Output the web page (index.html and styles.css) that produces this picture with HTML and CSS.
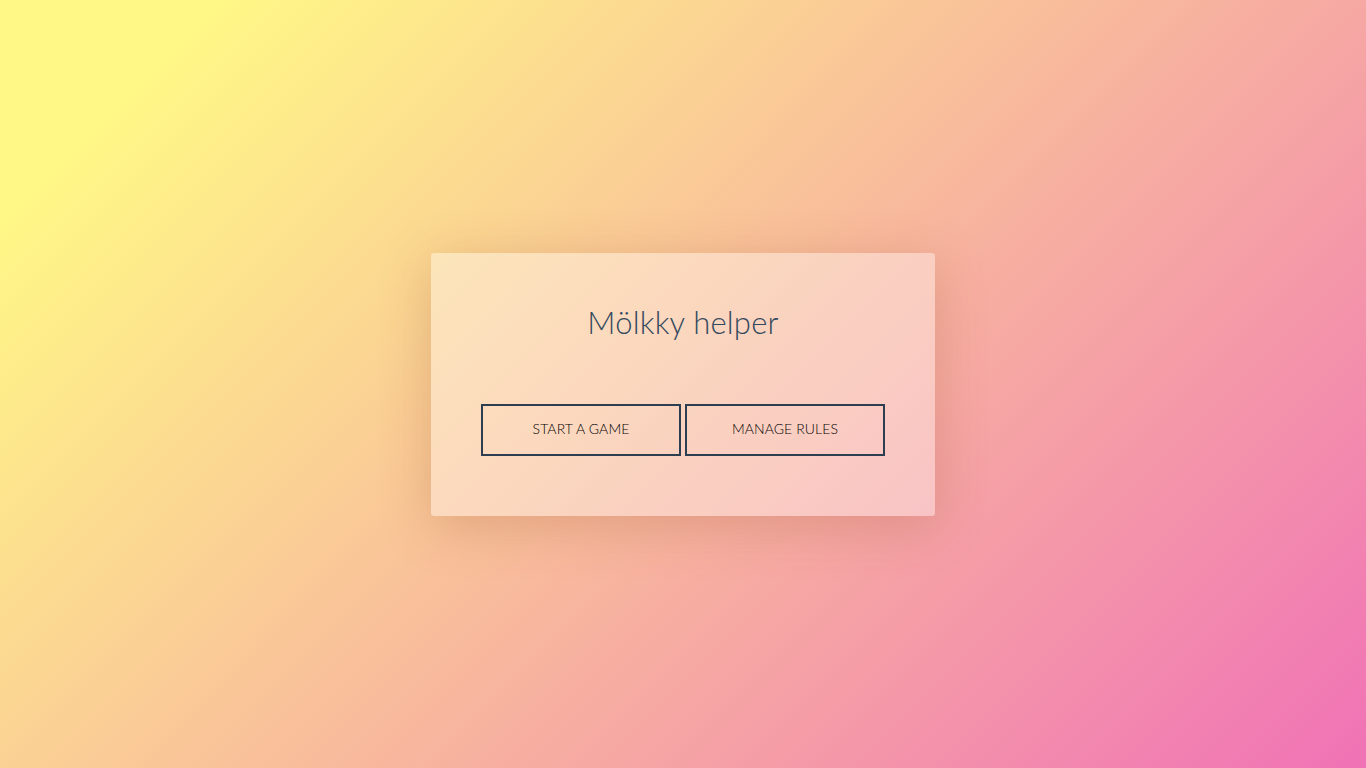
FILE: index.html
```html
<!DOCTYPE html>
<html lang="en">
<head>
<meta charset="utf-8">
<title>Mölkky helper</title>
<link rel="stylesheet" href="styles.css">
</head>
<body>
<main class="page">
  <section class="card">
    <h1 class="title">Mölkky helper</h1>
    <div class="actions">
      <button class="btn">START A GAME</button>
      <button class="btn">MANAGE RULES</button>
    </div>
  </section>
</main>
</body>
</html>
```
FILE: styles.css
```css
html, body {
  margin: 0;
  height: 100%;
}
body {
  background: linear-gradient(135deg, #fff886 10%, #f072b6 100%);
  font-family: Lato, "Open Sans", sans-serif;
}
.page {
  height: 100%;
  display: flex;
  align-items: center;
  justify-content: center;
}
.card {
  width: 504px;
  height: 263px;
  box-sizing: border-box;
  padding: 48px 50px 0;
  background: rgba(255, 255, 255, 0.36);
  border-radius: 3px;
  box-shadow: 0 10px 50px rgba(150, 80, 40, 0.25);
  text-align: center;
}
.title {
  margin: 0;
  font-weight: 300;
  font-size: 31px;
  line-height: 42px;
  color: #34495e;
  letter-spacing: 0.2px;
}
.actions {
  display: flex;
  gap: 4px;
  margin-top: 61px;
}
.btn {
  width: 200px;
  height: 52px;
  background: transparent;
  border: 2px solid #2c3e50;
  font-family: Lato, "Open Sans", sans-serif;
  font-size: 14px;
  font-weight: 300;
  color: #000;
  padding: 0 0 2px;
  letter-spacing: 0.1px;
}
```
